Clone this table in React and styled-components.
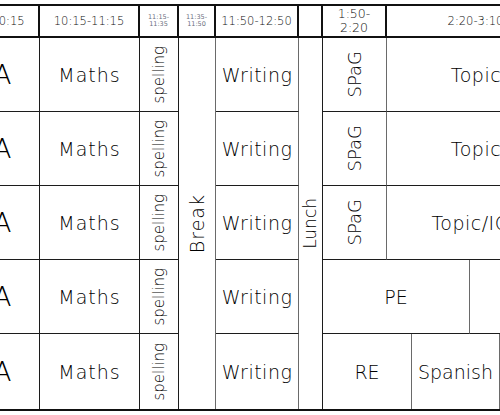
import React from 'react'
import styled, { createGlobalStyle } from 'styled-components'

const Global = createGlobalStyle`
  html, body {
    margin: 0;
    padding: 0;
    background: #fff;
    overflow: hidden;
  }
  body {
    font-family: "DejaVu Sans", "Noto Sans", sans-serif;
    color: #000;
  }
`

const Timetable = styled.div`
  display: grid;
  grid-template-columns: 92px 100px 39px 37px 83px 24px 64px 25px 58px 30px 66px;
  grid-template-rows: 32px 74px 74px 74px 74px 75px;
  width: 618px;
  margin: 4px 0 0 -52px;
  border-top: 2px solid #111;
  border-bottom: 2px solid #111;
  box-sizing: content-box;
`

const HeadCell = styled.div`
  grid-column: ${p => p.$col};
  grid-row: 1;
  display: flex;
  flex-direction: column;
  align-items: center;
  justify-content: center;
  box-sizing: border-box;
  border-right: 2px solid #111;
  border-bottom: 2px solid #111;
  font-size: ${p => p.$size || 11.5}px;
  font-weight: ${p => (p.$size && p.$size < 8 ? 400 : 200)};
  line-height: ${p => (p.$size ? Math.round(p.$size * 1.15) : 13)}px;
  color: ${p => (p.$size && p.$size < 8 ? '#6b6f80' : '#111')};
  text-align: center;
`

const Cell = styled.div`
  grid-column: ${p => p.$col};
  grid-row: ${p => p.$row};
  display: flex;
  align-items: center;
  justify-content: center;
  box-sizing: border-box;
  border-right: 1px solid ${p => (p.$soft ? '#6a6a6a' : '#1c1c1c')};
  border-bottom: ${p => (p.$last ? 'none' : '1px solid #1c1c1c')};
  font-size: ${p => p.$size || 19}px;
  font-weight: 200;
  letter-spacing: ${p => (p.$spacing !== undefined ? p.$spacing : 0.5)}px;
  white-space: nowrap;
  overflow: hidden;
`

const Upright = styled.span`
  writing-mode: vertical-rl;
  transform: rotate(180deg);
  line-height: 1;
`

const rows = [2, 3, 4, 5, 6]

const Vertical = ({ children }) => <Upright>{children}</Upright>

const App = () => {
  return (
    <>
      <Global />
      <Timetable>
        <HeadCell $col={1}>9:15-10:15</HeadCell>
        <HeadCell $col={2}>10:15-11:15</HeadCell>
        <HeadCell $col={3} $size={6.5}>
          <span>11:15-</span>
          <span>11:35</span>
        </HeadCell>
        <HeadCell $col={4} $size={6.5}>
          <span>11:35-</span>
          <span>11:50</span>
        </HeadCell>
        <HeadCell $col={5}>11:50-12:50</HeadCell>
        <HeadCell $col={6} />
        <HeadCell $col={7} $size={12.5}>
          <span>1:50-</span>
          <span>2:20</span>
        </HeadCell>
        <HeadCell $col="8 / span 4">2:20-3:10</HeadCell>

        {rows.map(r => (
          <React.Fragment key={r}>
            <Cell $col={1} $row={r} $last={r === 6} $size={27} $spacing={0}>RA</Cell>
            <Cell $col={2} $row={r} $last={r === 6} $spacing={1}>Maths</Cell>
            <Cell $col={3} $row={r} $last={r === 6} $size={15} $spacing={0}>
              <Vertical>spelling</Vertical>
            </Cell>
            <Cell $col={5} $row={r} $last={r === 6} $soft>Writing</Cell>
          </React.Fragment>
        ))}

        <Cell $col={4} $row="2 / span 5" $last $soft $size={19} $spacing={1}>
          <Vertical>Break</Vertical>
        </Cell>
        <Cell $col={6} $row="2 / span 5" $last $size={17} $spacing={0}>
          <Vertical>Lunch</Vertical>
        </Cell>

        {[2, 3, 4].map(r => (
          <React.Fragment key={r}>
            <Cell $col={7} $row={r} $soft $size={18} $spacing={0}>
              <Vertical>SPaG</Vertical>
            </Cell>
            <Cell $col="8 / span 4" $row={r}>{r === 4 ? 'Topic/ICT' : 'Topic'}</Cell>
          </React.Fragment>
        ))}

        <Cell $col="7 / span 3" $row={5} $soft $spacing={0}>PE</Cell>
        <Cell $col="10 / span 2" $row={5} />

        <Cell $col="7 / span 2" $row={6} $last $soft $spacing={0}>RE</Cell>
        <Cell $col="9 / span 2" $row={6} $last $soft $spacing={0}>Spanish</Cell>
        <Cell $col={11} $row={6} $last />
      </Timetable>
    </>
  )
}

export default App
